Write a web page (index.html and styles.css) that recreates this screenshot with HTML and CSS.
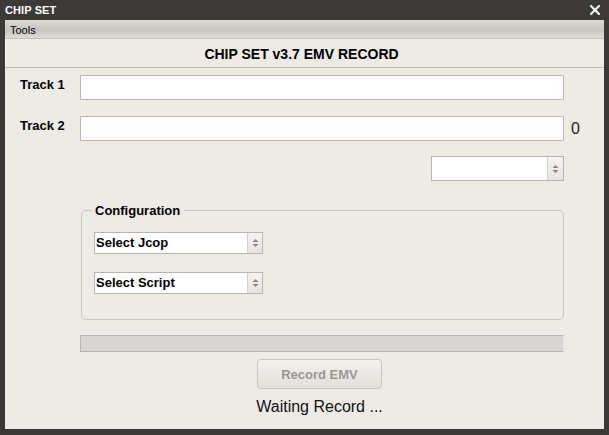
FILE: index.html
```html
<!DOCTYPE html>
<html>
<head>
<meta charset="utf-8">
<link rel="stylesheet" href="styles.css">
</head>
<body>
<div class="window">
  <div class="titlebar">
    <span class="title">CHIP SET</span>
    <svg class="close" width="10" height="10" viewBox="0 0 10 10"><path d="M1 1 L9 9 M9 1 L1 9" stroke="#f2f2f2" stroke-width="2.2" stroke-linecap="square"/></svg>
  </div>
  <div class="frame">
    <div class="menubar"><span class="menu-item">Tools</span></div>
    <div class="header">CHIP SET v3.7 EMV RECORD</div>
    <div class="content">
      <div class="track-row first">
        <span class="label">Track 1</span>
        <div class="input"></div>
      </div>
      <div class="track-row">
        <span class="label">Track 2</span>
        <div class="input"></div>
        <span class="count">0</span>
      </div>
      <div class="spin-row">
        <div class="spinbox">
          <div class="spin-field"></div>
          <div class="spin-btn">
            <svg width="7" height="10" viewBox="0 0 7 10"><path d="M3.5 1 L6.5 4 L0.5 4 Z M3.5 9 L6.5 6 L0.5 6 Z" fill="#8a8884"/></svg>
          </div>
        </div>
      </div>
      <fieldset class="config">
        <legend>Configuration</legend>
        <div class="combo">
          <span class="combo-text">Select Jcop</span>
          <div class="spin-btn small">
            <svg width="7" height="10" viewBox="0 0 7 10"><path d="M3.5 1 L6.5 4 L0.5 4 Z M3.5 9 L6.5 6 L0.5 6 Z" fill="#8a8884"/></svg>
          </div>
        </div>
        <div class="combo second">
          <span class="combo-text">Select Script</span>
          <div class="spin-btn small">
            <svg width="7" height="10" viewBox="0 0 7 10"><path d="M3.5 1 L6.5 4 L0.5 4 Z M3.5 9 L6.5 6 L0.5 6 Z" fill="#8a8884"/></svg>
          </div>
        </div>
      </fieldset>
      <div class="progress"></div>
      <div class="actions">
        <div class="button">Record EMV</div>
        <div class="status">Waiting Record ...</div>
      </div>
    </div>
  </div>
</div>
</body>
</html>
```

FILE: styles.css
```css
html, body {
  margin: 0;
  padding: 0;
  background: #3a3935;
}
.window {
  width: 609px;
  height: 435px;
  display: flex;
  flex-direction: column;
  font-family: "Liberation Sans", Arial, sans-serif;
  color: #000;
}
.titlebar {
  height: 20px;
  background: #3b3a36;
  display: flex;
  align-items: center;
  justify-content: space-between;
  padding: 0 9px 0 5px;
}
.title {
  color: #fff;
  font-weight: bold;
  font-size: 11px;
  letter-spacing: 0.1px;
}
.close {
  display: block;
  margin-top: -1px;
}
.frame {
  flex: 1;
  margin: 0 5px 6px 5px;
  background: #eeebe6;
  display: flex;
  flex-direction: column;
}
.menubar {
  height: 18px;
  background: linear-gradient(#dcd9d3, #c9c6c0 55%, #dedbd6);
  display: flex;
  align-items: center;
  padding-left: 5px;
}
.menu-item {
  font-size: 11px;
  padding-top: 1px;
}
.header {
  height: 27px;
  border-top: 1px solid #c3c0ba;
  border-bottom: 1px solid #bdbab5;
  display: flex;
  align-items: center;
  justify-content: center;
  font-weight: bold;
  font-size: 14px;
  padding: 1px 7px 0 0;
  box-sizing: content-box;
  border-left: 1px solid #f8f7f5;
}
.content {
  flex: 1;
  display: flex;
  flex-direction: column;
  padding-left: 15px;
}
.track-row {
  display: flex;
  align-items: center;
  height: 25px;
  margin-top: 16px;
}
.track-row.first {
  margin-top: 7px;
}
.label {
  width: 60px;
  font-weight: bold;
  font-size: 13px;
  margin-top: -6px;
}
.input {
  width: 482px;
  height: 23px;
  background: #fff;
  border: 1px solid #b9b6b1;
  border-radius: 1px;
}
.count {
  margin-left: 7px;
  font-size: 16px;
  color: #222;
}
.spin-row {
  display: flex;
  margin-top: 15px;
  padding-left: 411px;
}
.spinbox {
  width: 131px;
  height: 23px;
  border: 1px solid #b9b6b1;
  display: flex;
  background: #fff;
}
.spin-field {
  flex: 1;
}
.spin-btn {
  width: 15px;
  border-left: 1px solid #d2cfca;
  background: linear-gradient(#f4f3f1, #e6e4e0);
  display: flex;
  align-items: center;
  justify-content: center;
}
.spin-btn svg {
  display: block;
}
.config {
  margin: 22px 0 0 61px;
  width: 469px;
  height: 115px;
  box-sizing: content-box;
  border: 1px solid #c9c6c1;
  border-radius: 5px;
  padding: 0 0 0 12px;
  min-width: 0;
}
.config legend {
  font-weight: bold;
  font-size: 13px;
  padding: 0 4px 0 3px;
  margin-left: -2px;
}
.combo {
  width: 167px;
  height: 20px;
  border: 1px solid #b9b6b1;
  background: #fff;
  display: flex;
  margin-top: 14px;
}
.combo.second {
  margin-top: 18px;
}
.combo-text {
  flex: 1;
  font-weight: bold;
  font-size: 13px;
  padding-left: 1px;
  line-height: 20px;
}
.spin-btn.small {
  width: 14px;
}
.progress {
  margin: 15px 0 0 60px;
  width: 482px;
  height: 15px;
  background: #d8d7d5;
  border: 1px solid #bab8b4;
  border-right-color: #e4e2de;
  border-bottom-color: #b9b7b3;
}
.actions {
  width: 479px;
  margin-left: 60px;
  padding-right: 5px;
  display: flex;
  flex-direction: column;
  align-items: center;
}
.button {
  margin-top: 7px;
  width: 123px;
  height: 28px;
  border: 1px solid #c9c6c1;
  border-radius: 4px;
  background: linear-gradient(#f3f1ee, #e3e0db);
  color: #9a9894;
  font-weight: bold;
  font-size: 13px;
  display: flex;
  align-items: center;
  justify-content: center;
}
.status {
  margin-top: 9px;
  font-size: 16px;
  color: #111;
}
```
